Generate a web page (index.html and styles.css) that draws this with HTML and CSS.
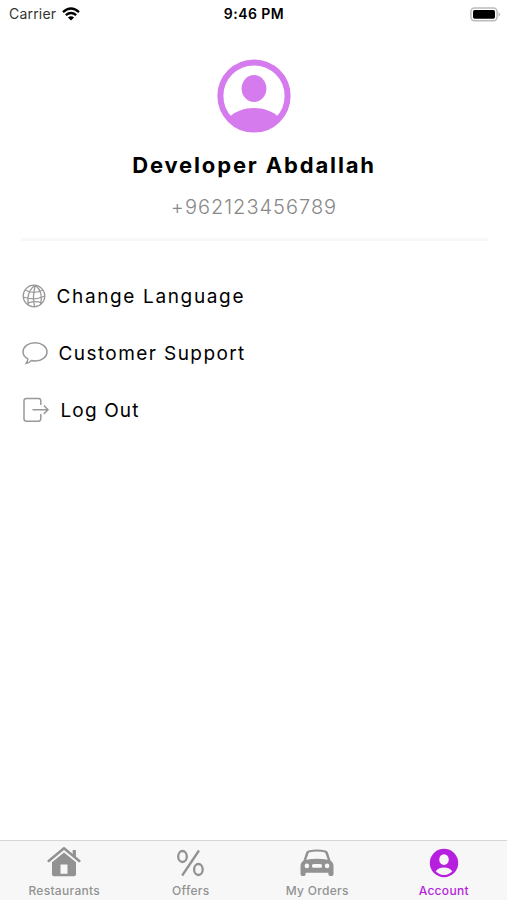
FILE: index.html
```html
<!DOCTYPE html>
<html lang="en">
<head>
<meta charset="utf-8">
<title>Account</title>
<link rel="stylesheet" href="styles.css">
</head>
<body>
<div class="screen">
  <header class="status">
    <div class="status-left"><span class="carrier">Carrier</span>
      <svg width="18" height="14" viewBox="0 0 18 14" fill="none" stroke="#000" stroke-width="2.4"><path d="M1 5.1Q9-2 17 5.1M3.8 8.1q5.200-4.300 10.400 0"/><path d="M9 13.600L5.900 10.500q3.100-2.300 6.200 0z" fill="#000" stroke="none"/></svg>
    </div>
    <div class="clock"><span>9:46 PM</span></div>
    <div class="status-right">
      <svg width="31" height="15" viewBox="0 0 31 15"><rect x=".9" y=".9" width="26.200" height="12.800" rx="3.600" fill="#fff" stroke="#bcbcbc" stroke-width="1.500"/><rect x="3" y="3" width="22" height="8.800" rx="1.700"/><path d="M28.700 5q2.400 2.300 0 4.600z" fill="#aaa"/></svg>
    </div>
  </header>
  <main class="content">
    <section class="profile">
      <svg class="avatar" width="74" height="74" viewBox="0 0 74 74" fill="#d57bed"><circle cx="37" cy="37" r="33.600" fill="none" stroke="#d57bed" stroke-width="6"/><ellipse cx="37" cy="29.500" rx="12.400" ry="13.500"/><path d="M12 58.500C24 45.800 50 45.800 62 58.500Q52 72 37 72T12 58.500z"/></svg>
      <h1 class="name"><span>Developer Abdallah</span></h1>
      <p class="phone"><span>+962123456789</span></p>
    </section>
    <nav class="menu">
      <a class="item">
        <svg width="24" height="24" viewBox="0 0 24 24" fill="none" stroke="#999" stroke-width="1.300"><circle cx="12" cy="12" r="10.800"/><path d="M13.500 1.300Q10 12 12.500 22.800M13.500 1.300Q4 7 6.500 21.300M13.500 1.300Q21.500 8 18.500 20.500M3 6q9 4.600 18 0M1.200 13q11 4 21.600-1M4.500 19.500q8-3.500 15.500-.5"/></svg>
        <span class="label language">Change Language</span></a>
      <a class="item">
        <svg width="26" height="24" viewBox="0 0 26 24" fill="none" stroke="#999" stroke-width="1.500" stroke-linejoin="round"><path d="M5.900 17.800C2.800 16.200 1 13.700 1 10.900 1 5.800 6.300 1.800 13 1.800s12 4 12 9.100-5.300 9.200-12 9.200c-1.400 0-2.600-.2-3.800-.5-1.300 1.600-3.200 2.600-5.300 2.900 1.200-1.200 1.900-2.800 2-4.700z"/></svg>
        <span class="label support">Customer Support</span></a>
      <a class="item">
        <svg width="28" height="26" viewBox="0 0 28 26" fill="none" stroke="#999" stroke-width="1.500"><path d="M18.800 8V3.800q0-2.300-2.300-2.300h-12Q2 1.500 2 3.800v18q0 2.400 2.400 2.400h12q2.400 0 2.400-2.400V17M10.500 12.700H26M21.800 8.500l4.200 4.200-4.200 4.200"/></svg>
        <span class="label logout">Log Out</span></a>
    </nav>
  </main>
  <footer class="tabs">
    <a class="tab">
      <svg width="34" height="32" viewBox="0 0 34 32" fill="#929292"><path d="M1.700 15L17 2.300 32.300 15" fill="none" stroke="#929292" stroke-width="2.500" stroke-linecap="round" stroke-linejoin="round"/><path d="M25.700 4h3.200v8l-3.200-2.700zM17 6.400l12 9.900v11.900q0 2.100-2.100 2.100H7.100Q5 30.300 5 28.200V16.300zM13.500 18.500v9.300h7v-9.300z" fill-rule="evenodd"/></svg>
      <span class="caption">Restaurants</span></a>
    <a class="tab">
      <svg width="34" height="32" viewBox="0 0 34 32" fill="none" stroke="#929292" stroke-width="2.300"><ellipse cx="8.500" cy="10.500" rx="4.300" ry="5.500"/><ellipse cx="24.400" cy="23.500" rx="4.300" ry="5.500"/><path d="M25 4.500L8.200 29.500"/></svg>
      <span class="caption">Offers</span></a>
    <a class="tab">
      <svg width="34" height="32" viewBox="0 0 34 32" fill="#929292"><path d="M8.300 4.600Q17 2.600 25.700 4.600q1.600.4 2.200 2l2.700 8.200q2.900 1.700 2.900 5.500v8q0 1.800-1.800 1.800h-1.500q-1.800 0-1.800-1.800v-1.600H5.600v1.600q0 1.800-1.800 1.800H2.300Q.5 30.100.5 28.300v-8q0-3.800 2.900-5.500l2.700-8.200q.6-1.600 2.200-2zM8.900 6.400L6.200 13.700q10.800-1.900 21.600 0L25.100 6.400Q17 4.800 8.900 6.400zM13.500 18q-1.500 0-1.500 1.500v.8q0 1.500 1.500 1.500h7q1.500 0 1.500-1.500v-.8q0-1.500-1.500-1.500z" fill-rule="evenodd"/><circle cx="6.900" cy="19.900" r="2.300" fill="#f7f7f7"/><circle cx="27.100" cy="19.900" r="2.300" fill="#f7f7f7"/></svg>
      <span class="caption">My Orders</span></a>
    <a class="tab active">
      <svg width="34" height="32" viewBox="0 0 34 32"><circle cx="17" cy="17" r="14.200" fill="#b51fdd"/><ellipse cx="17" cy="13.600" rx="4.800" ry="5.300" fill="#f7f7f7"/><path d="M8.700 25.300Q11 21.500 17 21.500t8.300 3.800Q22 28.900 17 28.900t-8.300-3.600z" fill="#f7f7f7"/></svg>
      <span class="caption">Account</span></a>
  </footer>
</div>
</body>
</html>
```
FILE: styles.css
```css
* { box-sizing: border-box; }
body { margin: 0; background: #fff; font-family: Inter, "Liberation Sans", sans-serif; color: #000; }
.screen { height: 900px; display: flex; flex-direction: column; }
.status { height: 28px; display: grid; grid-template-columns: 1fr 1fr 1fr; padding: 0 6px 0 9px; font-size: 14px; line-height: 28px; }
.status-left { display: flex; align-items: center; gap: 6px; }
.carrier { color: #333; letter-spacing: .2px; }
.clock { text-align: center; font-weight: 600; letter-spacing: .45px; padding-right: 2px; }
.status-right { display: flex; align-items: center; justify-content: flex-end; }
.content { flex: 1; padding: 31px 19px 0 21px; }
.profile { height: 182px; display: flex; flex-direction: column; align-items: center; padding-right: 1px; border-bottom: 3px solid #f8f8f8; }
.avatar { flex: none; }
.name { margin: 16px 0 0; font-size: 22px; line-height: 32px; font-weight: 700; letter-spacing: 1.850px; white-space: nowrap; }
.phone { margin: 11px 0 0; font-size: 20px; line-height: 30px; font-weight: 300; color: #888; letter-spacing: 1px; }
.menu { padding: 27px 0 0 1px; }
.item { height: 56.700px; display: flex; align-items: center; gap: 10.500px; }
.item svg { flex: none; }
.label { padding-top: 2px; font-size: 19px; line-height: 28px; white-space: nowrap; }
.language { letter-spacing: 1.640px; }
.support { letter-spacing: 1.420px; }
.logout { letter-spacing: 1.130px; }
.tabs { height: 60px; display: flex; padding-left: 1px; background: #f7f7f7; border-top: 1px solid #d5d5d5; }
.tab { flex: 1; display: flex; flex-direction: column; align-items: center; padding-top: 5px; color: #929292; }
.tab svg { flex: none; }
.caption { font-size: 12px; line-height: 16px; margin-top: 5px; font-weight: 500; letter-spacing: .3px; }
.active { color: #b51fdd; }
```
